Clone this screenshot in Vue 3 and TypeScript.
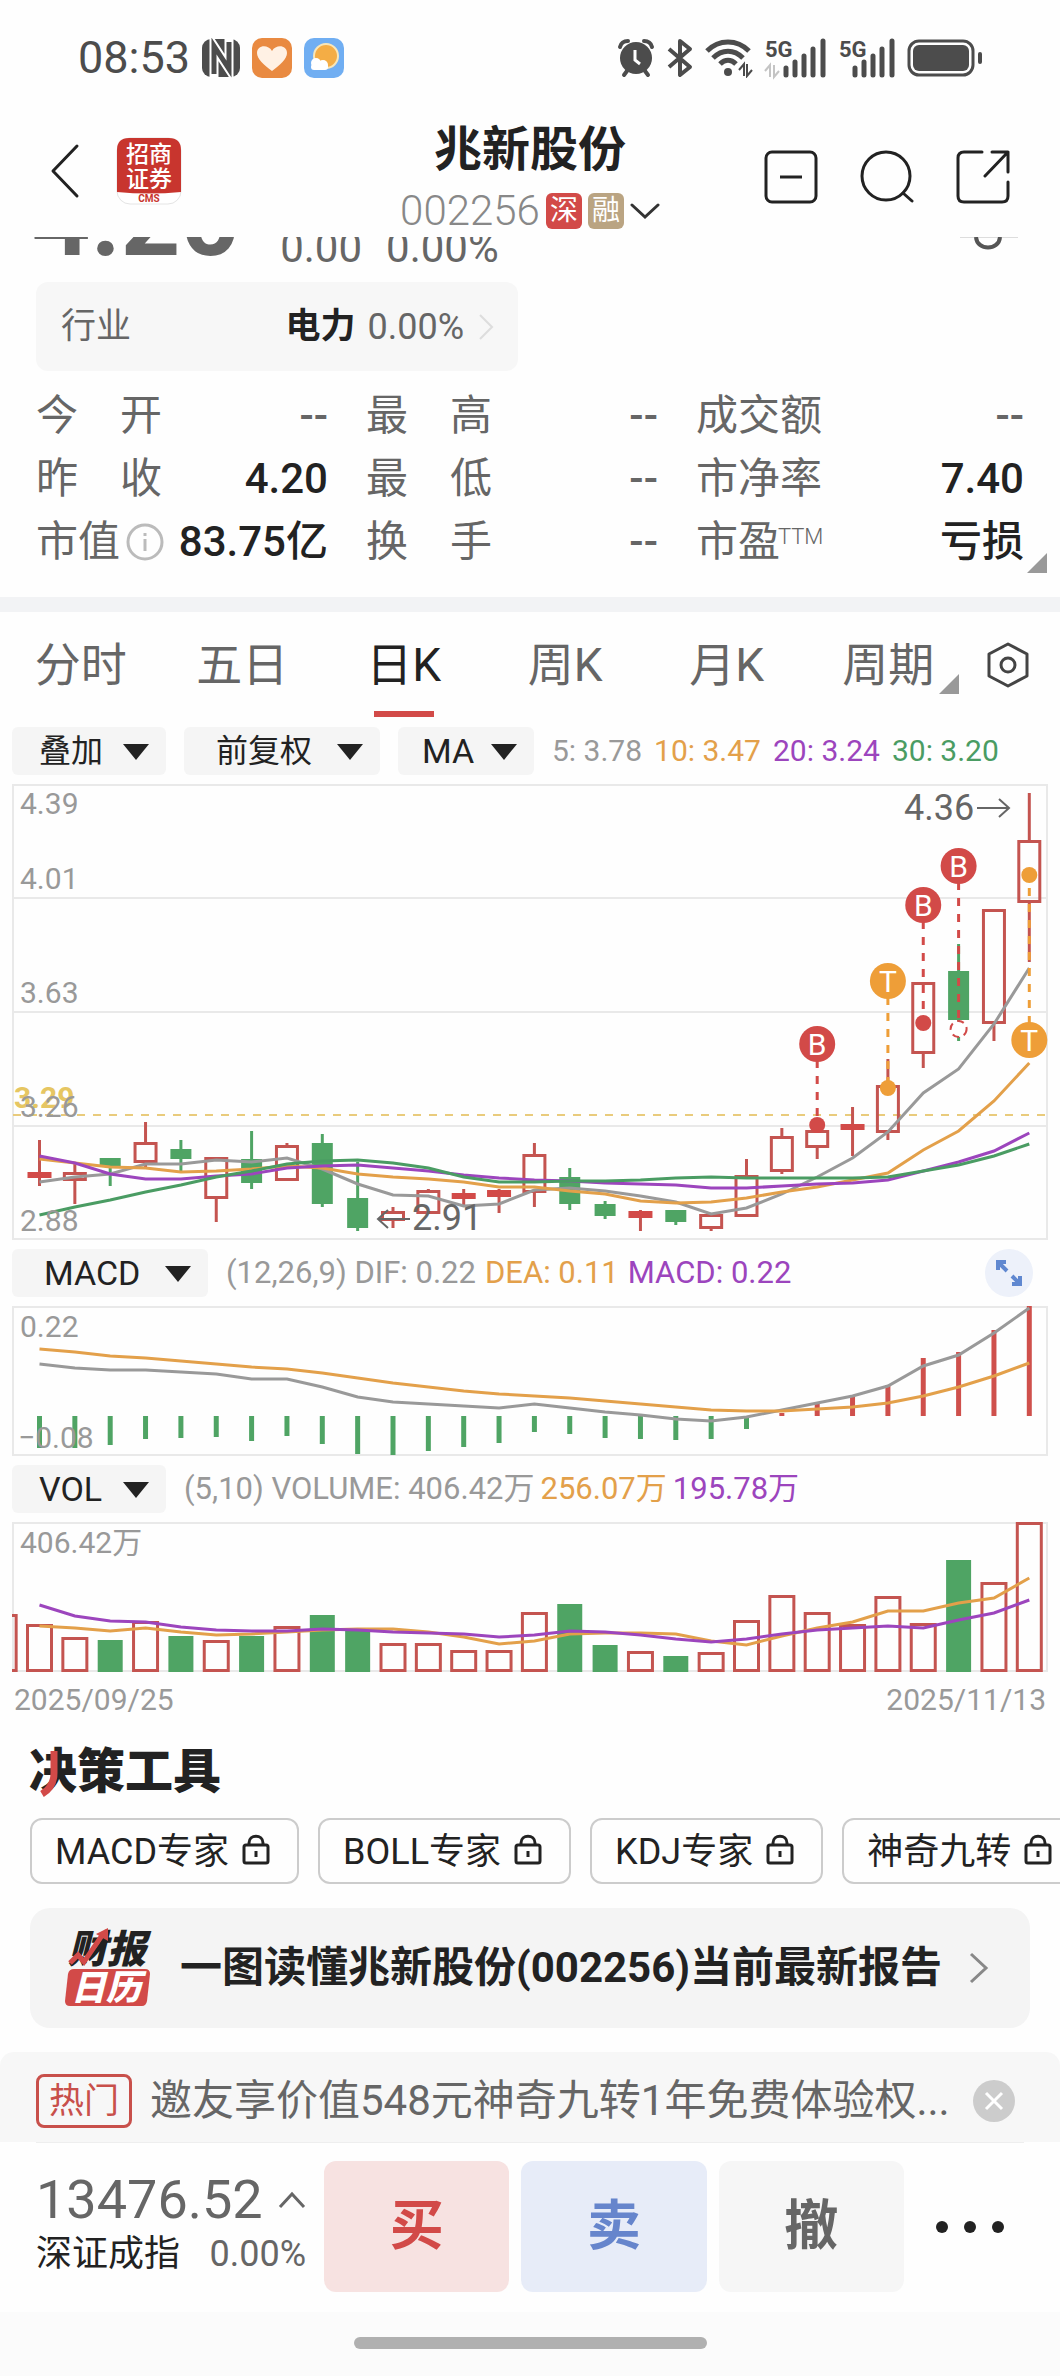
<script setup lang="ts">
import { ref } from 'vue'

type Kind = 'up' | 'solid' | 'down'
type Candle = [high: number, top: number, bottom: number, low: number, kind: Kind]

const STEP = 35.35
const cx = (i: number) => 27.5 + STEP * i
const line = (ys: number[]) => ys.map((y, i) => `${cx(i).toFixed(1)},${y}`).join(' ')

const candles: Candle[] = [
  [356, 388, 394, 402, 'solid'], [379, 388, 397, 420, 'up'], [374, 374, 383, 402, 'down'],
  [338, 358, 379, 383, 'up'], [356, 365, 375, 387, 'down'], [373, 373, 415, 438, 'up'],
  [347, 375, 399, 405, 'down'], [359, 361, 397, 397, 'up'], [350, 359, 420, 423, 'down'],
  [378, 414, 444, 447, 'down'], [423, 427, 437, 444, 'up'], [405, 406, 430, 430, 'up'],
  [405, 409, 415, 421, 'solid'], [405, 406, 413, 429, 'solid'], [359, 370, 409, 423, 'up'],
  [384, 393, 420, 426, 'down'], [417, 420, 432, 435, 'down'], [426, 427, 434, 447, 'solid'],
  [426, 426, 438, 441, 'down'], [430, 430, 445, 447, 'up'], [375, 391, 433, 433, 'up'],
  [344, 352, 388, 390, 'up'], [340, 346, 364, 375, 'up'], [323, 340, 346, 372, 'solid'],
  [275, 301, 349, 356, 'up'], [198, 198, 270, 284, 'up'], [160, 187, 236, 257, 'down'],
  [125, 125, 240, 257, 'up'], [9, 56, 119, 178, 'up'],
]

const averages = [
  { color: '#999', ys: [398, 393, 390, 380, 380, 376, 378, 374, 385, 400, 411, 412, 422, 420, 406, 404, 407, 412, 418, 430, 424, 410, 393, 374, 348, 309, 285, 240, 184] },
  { color: '#e3a04a', ys: [375, 379, 383, 384, 388, 387, 385, 382, 384, 390, 393, 395, 398, 403, 403, 407, 410, 417, 419, 418, 414, 408, 403, 396, 389, 366, 347, 317, 279] },
  { color: '#9c45bd', ys: [372, 379, 390, 395, 395, 392, 390, 384, 382, 381, 384, 387, 391, 394, 396, 397, 399, 400, 401, 404, 404, 402, 400, 399, 396, 387, 378, 367, 349] },
  { color: '#4a9c63', ys: [431, 423, 416, 408, 401, 393, 387, 380, 377, 376, 379, 384, 393, 398, 398, 397, 397, 396, 394, 393, 394, 394, 394, 394, 393, 387, 381, 372, 360] },
]

const marks = [
  { i: 22, letter: 'B', y: 260, dot: 341, color: '#d24a48' },
  { i: 24, letter: 'T', y: 197, dot: 304, color: '#ee9e38' },
  { i: 25, letter: 'B', y: 121, dot: 239, color: '#d24a48' },
  { i: 26, letter: 'B', y: 82, dot: 245, color: '#d24a48', hollow: true },
  { i: 28, letter: 'T', y: 256, dot: 91, color: '#ee9e38' },
]

const priceLabels = [
  { text: '4.39', y: 30 }, { text: '4.01', y: 105 }, { text: '3.63', y: 219 },
  { text: '3.26', y: 333 }, { text: '2.88', y: 447 },
]

const macdBars = [142, 142, 139, 133, 132, 131, 135, 130, 138, 148, 149, 145, 141, 137, 126, 128, 132, 133, 134, 133, 123, 107, 97, 91, 79, 52, 46, 24, 0]
const macdLines = [
  { color: '#999', ys: [58, 62, 64, 64, 66, 68, 73, 73, 81, 91, 96, 98, 100, 102, 98, 102, 106, 109, 113, 115, 111, 104, 97, 90, 80, 60, 49, 27, 2] },
  { color: '#e3a04a', ys: [43, 46, 50, 52, 55, 58, 61, 63, 67, 72, 77, 81, 85, 88, 90, 92, 95, 98, 101, 104, 105, 105, 103, 101, 97, 90, 81, 70, 57] },
]

const volTops = [92, 102, 115, 118, 99, 114, 118, 114, 104, 93, 109, 121, 121, 128, 128, 90, 82, 123, 129, 134, 130, 98, 73, 90, 102, 74, 101, 38, 60, 0]
const volDown = new Set([2, 4, 6, 8, 9, 15, 16, 18, 26])
const volumes = volTops.map((top, n) => ({ i: n - 1, top, down: volDown.has(n - 1) }))
const volLines = [
  { color: '#e3a04a', ys: [104, 106, 109, 106, 110, 113, 112, 110, 108, 107, 107, 110, 115, 122, 119, 112, 111, 111, 112, 119, 123, 114, 106, 100, 89, 89, 81, 76, 56] },
  { color: '#9c45bd', ys: [83, 94, 99, 100, 105, 108, 109, 109, 107, 108, 110, 111, 112, 115, 113, 109, 110, 113, 117, 120, 117, 112, 108, 106, 104, 106, 98, 91, 78] },
]

const stats = [
  { label: '今 开', value: '--' }, { label: '最 高', value: '--' }, { label: '成交额', value: '--' },
  { label: '昨 收', value: '4.20' }, { label: '最 低', value: '--' }, { label: '市净率', value: '7.40' },
  { label: '市值', value: '83.75亿', info: true }, { label: '换 手', value: '--' }, { label: '市盈', value: '亏损', sup: 'TTM' },
]

const tabs = ['分时', '五日', '日K', '周K', '月K', '周期']
const activeTab = ref('日K')
const tools = ['MACD专家', 'BOLL专家', 'KDJ专家', '神奇九转']
</script>

<template>
  <div class="screen">
    <div class="status">
      <div class="status-side">
        <span class="clock">08:53</span>
        <svg width="38" height="40" viewBox="0 0 38 40">
          <rect x="0" y="1" width="38" height="38" rx="9" fill="#4c4c4c" />
          <path d="M12 40V8L27 31V0" fill="none" stroke="#fff" stroke-width="9" />
          <path d="M12 36V8L27 31V4" fill="none" stroke="#4c4c4c" stroke-width="5" />
        </svg>
        <svg width="40" height="40" viewBox="0 0 40 40">
          <rect width="40" height="40" rx="10" fill="#e98a41" />
          <path d="M20 33C12 27 5 21 5 15C5 7 16 6 20 13C24 6 35 7 35 15C35 21 28 27 20 33Z" fill="#fff1e4" />
        </svg>
        <svg width="40" height="40" viewBox="0 0 40 40">
          <rect width="40" height="40" rx="10" fill="#70aef2" />
          <circle cx="22" cy="18" r="12" fill="#f4ad45" stroke="#f8e6b8" stroke-width="2" />
          <circle cx="12" cy="25" r="5" fill="#fff" />
          <circle cx="19" cy="27" r="5" fill="#fff" />
          <rect x="7" y="26" width="17" height="6" rx="3" fill="#fff" />
        </svg>
      </div>
      <div class="status-side">
        <svg width="38" height="40" viewBox="0 0 38 40">
          <g fill="none" stroke="#4c4c4c" stroke-width="4" stroke-linecap="round">
            <path d="M3 9C4 5 7 3 11 3M35 9C34 5 31 3 27 3M7 37L10 33M31 37L28 33" />
          </g>
          <circle cx="19" cy="20" r="16" fill="#4c4c4c" />
          <path d="M18 12V22L23 26" fill="none" stroke="#fff" stroke-width="3" />
        </svg>
        <svg width="26" height="40" viewBox="0 0 26 40">
          <path d="M2 11L23 29L13 37V3L23 11L2 29" fill="none" stroke="#4c4c4c" stroke-width="4" stroke-linejoin="round" />
        </svg>
        <svg width="48" height="40" viewBox="0 0 48 40">
          <g fill="none" stroke="#4c4c4c" stroke-width="5">
            <path d="M2 13C14 1 32 1 44 13M8 20C17 11 29 11 38 20M15 26C20 21 26 21 31 26" />
          </g>
          <circle cx="23" cy="34" r="4" fill="#4c4c4c" />
          <path d="M34 32L39 26V38M42 26V38L47 32" fill="none" stroke="#4c4c4c" stroke-width="2" />
        </svg>
        <svg class="cell" width="62" height="40" viewBox="0 0 62 40">
          <text x="0" y="19" font-size="22" font-weight="700" fill="#4c4c4c">5G</text>
          <path d="M0 33L5 27V39M9 27V39L14 33" fill="none" stroke="#c4c4c4" stroke-width="2" />
          <path d="M21 37V30M30 37V24M39 37V18M48 37V11M58 37V3" stroke="#4c4c4c" stroke-width="5" stroke-linecap="round" />
        </svg>
        <svg class="cell" width="56" height="40" viewBox="0 0 56 40">
          <text x="0" y="19" font-size="22" font-weight="700" fill="#4c4c4c">5G</text>
          <path d="M16 37V30M25 37V24M34 37V18M43 37V11M53 37V3" stroke="#4c4c4c" stroke-width="5" stroke-linecap="round" />
        </svg>
        <svg width="76" height="40" viewBox="0 0 76 40">
          <rect x="2" y="3" width="64" height="34" rx="10" fill="none" stroke="#4c4c4c" stroke-width="3" />
          <rect x="6" y="7" width="56" height="26" rx="6" fill="#4c4c4c" />
          <rect x="71" y="14" width="4" height="12" rx="2" fill="#4c4c4c" />
        </svg>
      </div>
    </div>

    <header class="header">
      <div class="head-left">
        <button class="icon" aria-label="返回">
          <svg width="30" height="56" viewBox="0 0 30 56"><path d="M27 3L3 28L27 53" fill="none" stroke="#222" stroke-width="3" stroke-linecap="round" stroke-linejoin="round" /></svg>
        </button>
        <svg width="66" height="68" viewBox="0 0 66 68" aria-label="招商证券">
          <rect x="1" y="1" width="64" height="66" rx="13" fill="#fff" stroke="#e4e4e4" />
          <path d="M1 55V13Q1 1 13 1H53Q65 1 65 13V55Q33 58 1 55Z" fill="#c8352e" />
          <text x="33" y="25" text-anchor="middle" font-size="23" font-weight="500" fill="#fff">招商</text>
          <text x="33" y="50" text-anchor="middle" font-size="23" font-weight="500" fill="#fff">证券</text>
          <text x="33" y="65" text-anchor="middle" font-size="10" font-weight="700" fill="#c8352e">CMS</text>
        </svg>
      </div>
      <div class="head-title">
        <h1>兆新股份</h1>
        <button class="code">
          <span>002256</span><i class="tag red">深</i><i class="tag tan">融</i>
          <svg width="30" height="20" viewBox="0 0 30 20"><path d="M2 4L15 16L28 4" fill="none" stroke="#333" stroke-width="3" stroke-linecap="round" /></svg>
        </button>
      </div>
      <div class="head-right">
        <button class="icon" aria-label="移出自选">
          <svg width="54" height="54" viewBox="0 0 54 54"><g fill="none" stroke="#222" stroke-width="3"><rect x="2" y="2" width="50" height="50" rx="6" /><path d="M16 27H38" /></g></svg>
        </button>
        <button class="icon" aria-label="搜索">
          <svg width="54" height="54" viewBox="0 0 54 54"><g fill="none" stroke="#222" stroke-width="3" stroke-linecap="round"><circle cx="26" cy="26" r="24" /><path d="M43 43L52 51" /></g></svg>
        </button>
        <button class="icon" aria-label="分享">
          <svg width="54" height="54" viewBox="0 0 54 54"><g fill="none" stroke="#222" stroke-width="3" stroke-linecap="round" stroke-linejoin="round"><path d="M26 2H8Q2 2 2 8V46Q2 52 8 52H46Q52 52 52 46V32" /><path d="M36 2H52V22M52 2L29 26" /></g></svg>
        </button>
      </div>
    </header>

    <section class="quote">
      <span class="price">4.20</span>
      <span class="change">0.00</span>
      <span class="change">0.00%</span>
      <svg class="quote-icon" width="58" height="45" viewBox="0 0 58 45"><path d="M0 0H58" stroke="#ddd" stroke-width="2" /><path d="M16 0C17 14 39 14 40 0" fill="none" stroke="#555" stroke-width="4" /></svg>
    </section>

    <a class="industry" href="#industry">
      <span>行业</span>
      <b>电力</b>
      <span class="pct">0.00%</span>
      <svg width="16" height="28" viewBox="0 0 16 28"><path d="M2 2L14 14L2 26" fill="none" stroke="#ddd" stroke-width="2" /></svg>
    </a>

    <dl class="stats">
      <div v-for="s in stats" :key="s.label" class="stat">
        <dt :class="{ spread: s.label.includes(' ') }">
          {{ s.label }}<sup v-if="s.sup">{{ s.sup }}</sup>
          <svg v-if="s.info" width="38" height="38" viewBox="0 0 38 38"><g fill="none" stroke="#bbb" stroke-width="3"><circle cx="19" cy="19" r="17" /><path d="M19 16V28M19 10V13" /></g></svg>
        </dt>
        <dd :class="{ muted: s.value === '--' }">{{ s.value }}</dd>
      </div>
      <span class="corner"></span>
    </dl>

    <nav class="tabs">
      <button v-for="t in tabs" :key="t" :class="{ active: t === activeTab }" @click="activeTab = t">
        {{ t }}<span v-if="t === '周期'" class="corner"></span>
      </button>
      <button class="gear" aria-label="设置">
        <svg width="42" height="46" viewBox="0 0 42 46"><g fill="none" stroke="#444" stroke-width="3" stroke-linejoin="round"><path d="M21 2L40 12V34L21 44L2 34V12Z" /><circle cx="21" cy="23" r="7" /></g></svg>
      </button>
    </nav>

    <div class="bar">
      <label class="pick w154"><select aria-label="叠加"><option>叠加</option></select></label>
      <label class="pick w196 lead"><select aria-label="复权"><option>前复权</option></select></label>
      <label class="pick w136 latin"><select aria-label="主图指标"><option>MA</option></select></label>
      <p class="legend main"><span>5: 3.78</span><span class="o">10: 3.47</span><span class="p">20: 3.24</span><span class="g">30: 3.20</span></p>
    </div>

    <svg class="chart" viewBox="0 0 1036 456">
      <path d="M1 114H1035M1 228H1035M1 342H1035" stroke="#e9e9e9" stroke-width="2" />
      <rect x="1" y="1" width="1034" height="454" fill="none" stroke="#e9e9e9" stroke-width="2" />
      <path d="M1 331H1035" stroke="#e9cb7c" stroke-width="2" stroke-dasharray="8 8" />
      <g v-for="(c, i) in candles" :key="i">
        <template v-if="c[4] === 'up'">
          <path :d="`M${cx(i)} ${c[0]}V${c[1]}M${cx(i)} ${c[2]}V${c[3]}`" stroke="#c45450" stroke-width="3" />
          <rect :x="cx(i) - 10.5" :y="c[1] + 1.5" width="21" :height="c[2] - c[1] - 3" fill="none" stroke="#c45450" stroke-width="3" />
        </template>
        <template v-else>
          <path :d="`M${cx(i)} ${c[0]}V${c[3]}`" :stroke="c[4] === 'down' ? '#4fa464' : '#c45450'" stroke-width="3" />
          <rect :x="cx(i) - (c[4] === 'down' ? 10.5 : 12)" :y="c[1]" :width="c[4] === 'down' ? 21 : 24" :height="c[2] - c[1]" :fill="c[4] === 'down' ? '#4fa464' : '#d24a48'" />
        </template>
      </g>
      <polyline v-for="a in averages" :key="a.color" :points="line(a.ys)" fill="none" :stroke="a.color" stroke-width="3" />
      <g v-for="m in marks" :key="m.i">
        <path :d="`M${cx(m.i)} ${m.y}V${m.dot}`" :stroke="m.color" stroke-width="3" stroke-dasharray="8 8" />
        <circle v-if="m.hollow" :cx="cx(m.i)" :cy="m.dot" r="8" fill="#fff" :stroke="m.color" stroke-width="2" stroke-dasharray="7 5" />
        <circle v-else :cx="cx(m.i)" :cy="m.dot" r="8" :fill="m.color" />
        <circle :cx="cx(m.i)" :cy="m.y" r="18" :fill="m.color" />
        <text :x="cx(m.i)" :y="m.y + 11" text-anchor="middle" font-size="30" fill="#fff">{{ m.letter }}</text>
      </g>
      <text x="2" y="324" font-size="30" font-weight="700" fill="#e6c662">3.29</text>
      <text v-for="l in priceLabels" :key="l.text" x="8" :y="l.y" font-size="30" fill="#999">{{ l.text }}</text>
      <g fill="none" stroke="#666" stroke-width="2">
        <path d="M398 435H366M376 426L366 435L376 444" />
        <path d="M965 24H997M987 15L997 24L987 33" />
      </g>
      <text x="400" y="446" font-size="36" fill="#666">2.91</text>
      <text x="892" y="36" font-size="36" fill="#666">4.36</text>
    </svg>

    <div class="bar">
      <label class="pick w196 lead latin"><select aria-label="副图指标一"><option>MACD</option></select></label>
      <p class="legend"><span>(12,26,9) DIF: 0.22</span><span class="o">DEA: 0.11</span><span class="p">MACD: 0.22</span></p>
      <button class="expand" aria-label="全屏">
        <svg width="48" height="48" viewBox="0 0 48 48"><g fill="none" stroke="#6088d0" stroke-width="4"><path d="M13 21V13H21M13 13L22 22M27 27L35 35M35 27V35H27" /></g></svg>
      </button>
    </div>

    <svg class="chart" viewBox="0 0 1036 150">
      <rect x="1" y="1" width="1034" height="148" fill="none" stroke="#e9e9e9" stroke-width="2" />
      <path v-for="(y, i) in macdBars" :key="i" :d="`M${cx(i)} 110V${y}`" :stroke="y > 110 ? '#4fa464' : '#cf504c'" stroke-width="5" />
      <polyline v-for="a in macdLines" :key="a.color" :points="line(a.ys)" fill="none" :stroke="a.color" stroke-width="3" />
      <text x="8" y="31" font-size="30" fill="#999">0.22</text>
      <text x="6" y="142" font-size="30" fill="#999">−0.08</text>
    </svg>

    <div class="bar">
      <label class="pick w154 latin"><select aria-label="副图指标二"><option>VOL</option></select></label>
      <p class="legend tight"><span>(5,10) VOLUME: 406.42万</span><span class="o">256.07万</span><span class="p">195.78万</span></p>
    </div>

    <svg class="chart" viewBox="0 0 1036 150">
      <rect x="1" y="1" width="1034" height="148" fill="none" stroke="#e9e9e9" stroke-width="2" />
      <g v-for="v in volumes" :key="v.i">
        <rect v-if="v.down" :x="cx(v.i) - 12.5" :y="v.top" width="25" :height="150 - v.top" fill="#4fa464" />
        <rect v-else :x="cx(v.i) - 12" :y="v.top + 1.5" width="24" :height="147 - v.top" fill="none" stroke="#c45450" stroke-width="3" />
      </g>
      <polyline v-for="a in volLines" :key="a.color" :points="line(a.ys)" fill="none" :stroke="a.color" stroke-width="3" />
      <text x="8" y="31" font-size="30" fill="#999">406.42万</text>
    </svg>
    <div class="dates"><span>2025/09/25</span><span>2025/11/13</span></div>

    <h2>
      决策工具
      <svg width="24" height="48" viewBox="0 0 24 48"><path d="M16 2V24Q16 38 4 45" fill="none" stroke="#d24a48" stroke-width="7" /></svg>
    </h2>
    <div class="tools">
      <button v-for="t in tools" :key="t">
        {{ t }}
        <svg width="28" height="32" viewBox="0 0 28 32"><g fill="none" stroke="#222" stroke-width="3"><rect x="2" y="11" width="24" height="18" rx="2" /><path d="M7 11V9C7 0 21 0 21 9V11M14 17V23" /></g></svg>
      </button>
    </div>

    <a class="report" href="#report">
      <svg width="88" height="82" viewBox="0 0 88 82" aria-label="财报日历">
        <text x="3" y="36" font-size="39" font-weight="900" font-style="italic" fill="#222">财报</text>
        <path d="M5 36L13 28L19 35L38 7" fill="none" stroke="#d24a48" stroke-width="5" />
        <path d="M31 7L43 1V14Z" fill="#d24a48" />
        <path d="M9 42H80Q85 42 85 47L82 74Q81 79 77 79H5Q0 79 0 74L3 47Q4 42 9 42Z" fill="#d24a48" />
        <text x="6" y="73" font-size="35" font-weight="900" font-style="italic" fill="#fff">日历</text>
      </svg>
      <strong>一图读懂兆新股份(002256)当前最新报告</strong>
      <svg width="20" height="34" viewBox="0 0 20 34"><path d="M2 3L17 17L2 31" fill="none" stroke="#888" stroke-width="3" /></svg>
    </a>

    <div class="hot">
      <span class="hot-tag">热门</span>
      <a href="#promo">邀友享价值548元神奇九转1年免费体验权...</a>
      <button class="icon" aria-label="关闭">
        <svg width="42" height="42" viewBox="0 0 42 42"><circle cx="21" cy="21" r="21" fill="#ccc" /><path d="M13 13L29 29M29 13L13 29" stroke="#fff" stroke-width="3" /></svg>
      </button>
    </div>

    <footer class="trade">
      <div class="index">
        <div class="index-top">13476.52
          <svg width="28" height="18" viewBox="0 0 28 18"><path d="M2 16L14 3L26 16" fill="none" stroke="#666" stroke-width="3" /></svg>
        </div>
        <div class="index-sub"><span>深证成指</span><span class="pct">0.00%</span></div>
      </div>
      <button class="act buy">买</button>
      <button class="act sell">卖</button>
      <button class="act cancel">撤</button>
      <button class="more" aria-label="更多">
        <svg width="70" height="14" viewBox="0 0 70 14"><g fill="#222"><circle cx="7" cy="7" r="6" /><circle cx="35" cy="7" r="6" /><circle cx="63" cy="7" r="6" /></g></svg>
      </button>
    </footer>
    <div class="home"><span></span></div>
  </div>
</template>

<style>
body {
  margin: 0;
  background: #fff;
}
</style>

<style scoped>
.screen {
  font-family: Roboto, "Noto Sans CJK SC", sans-serif;
  color: #222;
  background: #fefefe;
  overflow: hidden;
}
.screen * {
  box-sizing: border-box;
}
svg {
  display: block;
  flex: none;
}
button,
select {
  font: inherit;
  color: inherit;
  background: none;
  border: 0;
  padding: 0;
  margin: 0;
}
a {
  color: inherit;
  text-decoration: none;
}
.status {
  display: flex;
  justify-content: space-between;
  padding: 38px 77px 0 78px;
  height: 116px;
}
.status-side {
  display: flex;
  gap: 12px;
  height: 40px;
  align-items: center;
}
.clock {
  font-size: 45px;
  line-height: 40px;
  color: #4c4c4c;
}
.cell {
  overflow: visible;
}
.header {
  display: grid;
  grid-template-columns: 1fr auto 1fr;
  height: 121px;
  padding: 0 50px;
}
.head-left {
  display: flex;
  align-items: center;
  gap: 36px;
  padding-bottom: 11px;
}
.head-title {
  padding-top: 2px;
  text-align: center;
}
h1 {
  margin: 0 0 8px;
  font-size: 48px;
  line-height: 64px;
  font-weight: 700;
}
.code {
  display: flex;
  align-items: center;
  gap: 6px;
  font-size: 42px;
  font-weight: 300;
  line-height: 42px;
  color: #888;
}
.tag {
  width: 36px;
  height: 36px;
  border-radius: 6px;
  color: #fff;
  font-size: 28px;
  font-style: normal;
  font-weight: 400;
  line-height: 36px;
}
.red {
  background: #d24a48;
}
.tan {
  background: #baa482;
}
.head-right {
  display: flex;
  align-items: center;
  justify-content: flex-end;
  gap: 42px;
}
.quote {
  display: flex;
  align-items: flex-end;
  height: 45px;
  overflow: hidden;
  padding: 0 42px 10px 31px;
  color: #666;
}
.price {
  font-size: 104px;
  line-height: 104px;
  font-weight: 700;
  margin-right: 40px;
}
.change {
  font-size: 42px;
  line-height: 48px;
  margin-right: 24px;
}
.quote-icon {
  margin: 0 0 -10px auto;
}
.industry {
  display: flex;
  align-items: center;
  width: 482px;
  height: 89px;
  margin-left: 36px;
  padding: 0 24px 0 25px;
  border-radius: 12px;
  background: #f7f7f7;
  font-size: 35px;
  line-height: 42px;
  color: #666;
}
.industry b {
  margin-left: auto;
  color: #222;
}
.industry .pct {
  margin: 0 14px 0 12px;
  font-size: 36px;
}
.stats {
  position: relative;
  display: grid;
  grid-template-columns: 291fr 291fr 327fr;
  column-gap: 38px;
  margin: 0;
  padding: 13px 36px 24px;
}
.stat {
  display: flex;
  justify-content: space-between;
  font-size: 42px;
  line-height: 63px;
}
dt {
  display: flex;
  align-items: center;
  gap: 6px;
  color: #666;
}
dt.spread {
  display: block;
  width: 126px;
  text-align-last: justify;
}
sup {
  font-size: 22px;
  line-height: 22px;
  align-self: flex-start;
  margin: 16px 0 0 -8px;
  font-weight: 300;
}
dd {
  margin: 0;
  font-weight: 500;
}
dd.muted {
  color: #666;
}
.corner {
  position: absolute;
  right: 13px;
  bottom: 24px;
  border: 10px solid;
  border-color: transparent #999 #999 transparent;
}
.tabs {
  display: flex;
  height: 121px;
  border-top: 15px solid #f2f3f5;
}
.tabs button {
  position: relative;
  flex: 1;
  font-size: 46px;
  line-height: 102px;
  color: #666;
}
.tabs .active {
  color: #222;
}
.tabs .active::after {
  content: "";
  position: absolute;
  left: calc(50% - 30px);
  bottom: 1px;
  width: 60px;
  height: 6px;
  background: #d24a48;
}
.tabs .corner {
  right: 10px;
}
.tabs .gear {
  flex: none;
  width: 91px;
  padding-left: 18px;
}
.bar {
  display: flex;
  align-items: center;
  height: 48px;
  margin: 9px 12px;
}
.pick {
  position: relative;
  height: 48px;
  border-radius: 6px;
  background: #f5f5f5;
  margin-right: 18px;
  flex: none;
}
.pick select {
  appearance: none;
  width: 100%;
  height: 48px;
  padding-left: 27px;
  font-size: 32px;
  line-height: 48px;
  outline: 0;
}
.lead select {
  padding-left: 32px;
}
.latin select {
  font-size: 34px;
}
.w136 select {
  padding-left: 24px;
}
.pick::after {
  content: "";
  position: absolute;
  right: 17px;
  top: 17px;
  border: 13px solid transparent;
  border-top: 16px solid #222;
  border-bottom: 0;
  pointer-events: none;
}
.w154 {
  width: 154px;
}
.w196 {
  width: 196px;
}
.w136 {
  width: 136px;
}
.legend {
  display: flex;
  gap: 9px;
  margin: 0;
  font-size: 31px;
  line-height: 50px;
  color: #999;
  white-space: nowrap;
}
.legend.main {
  gap: 12px;
  font-size: 30px;
}
.legend.tight {
  gap: 6px;
}
.o {
  color: #e3a04a;
}
.p {
  color: #9c45bd;
}
.g {
  color: #4a9c63;
}
.expand {
  margin: 0 15px 0 auto;
  border-radius: 24px;
  background: #edf1fa;
}
.chart {
  width: calc(100% - 24px);
  margin: 0 12px;
}
.dates {
  display: flex;
  justify-content: space-between;
  padding: 8px 14px 0;
  font-size: 30px;
  line-height: 40px;
  color: #999;
}
h2 {
  position: relative;
  margin: 24px 29px 18px;
  font-size: 48px;
  line-height: 56px;
  font-weight: 900;
}
h2 svg {
  position: absolute;
  left: 9px;
  top: 5px;
}
.tools {
  display: flex;
  gap: 19px;
  padding-left: 30px;
}
.tools button {
  display: flex;
  flex: none;
  align-items: center;
  gap: 13px;
  height: 66px;
  padding: 2px 27px 0 23px;
  border: 2px solid #ccc;
  border-radius: 12px;
  font-size: 36px;
  line-height: 42px;
}
.tools svg {
  margin-bottom: 4px;
}
.report {
  display: flex;
  align-items: center;
  gap: 27px;
  height: 120px;
  margin: 24px 30px;
  padding: 0 48px 0 35px;
  border-radius: 20px;
  background: #f4f4f4;
  font-size: 42px;
  line-height: 42px;
}
.report strong {
  flex: 1;
  white-space: nowrap;
}
.hot {
  display: flex;
  align-items: center;
  height: 90px;
  padding: 8px 45px 0 36px;
  border-radius: 14px 14px 0 0;
  background: #f7f7f7;
  color: #666;
  font-size: 42px;
  line-height: 60px;
}
.hot a {
  flex: 1;
  white-space: nowrap;
}
.hot-tag {
  width: 96px;
  height: 54px;
  margin-right: 18px;
  border: 3px solid #c8504b;
  border-radius: 8px;
  color: #c8504b;
  font-size: 35px;
  line-height: 50px;
  text-align: center;
}
.trade {
  display: flex;
  gap: 12px;
  margin: 0 36px;
  padding: 18px 0 20px;
  border-top: 1px solid #eee;
}
.index {
  width: 276px;
  flex: none;
}
.index-top {
  display: flex;
  align-items: center;
  justify-content: space-between;
  font-size: 54px;
  line-height: 62px;
  padding: 8px 6px 0 0;
  color: #666;
}
.index-sub {
  display: flex;
  justify-content: space-between;
  font-size: 36px;
  line-height: 46px;
  padding-right: 6px;
}
.index-sub .pct {
  color: #666;
}
.act {
  flex: 1;
  height: 131px;
  border-radius: 12px;
  font-size: 54px;
  line-height: 60px;
  font-weight: 700;
}
.buy {
  background: #f7e2e1;
  color: #d24a48;
}
.sell {
  background: #e7ecf8;
  color: #6685cc;
}
.cancel {
  background: #f6f6f6;
  color: #666;
}
.more {
  flex: none;
  width: 108px;
  display: flex;
  justify-content: center;
  align-items: center;
}
.home {
  height: 64px;
  padding-top: 25px;
  background: #fbfbfb;
}
.home span {
  display: block;
  width: 353px;
  height: 12px;
  margin: 0 auto;
  border-radius: 6px;
  background: #b0b0b0;
}
</style>
